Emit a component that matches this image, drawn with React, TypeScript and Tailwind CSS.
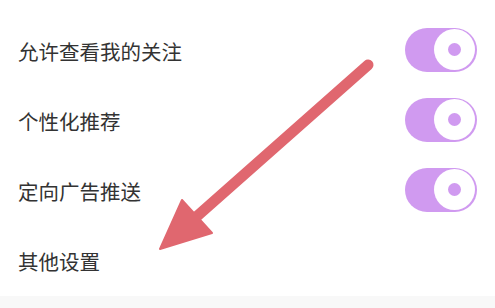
import React from "react";

const rows = [
  { label: "允许查看我的关注", toggle: true },
  { label: "个性化推荐", toggle: true },
  { label: "定向广告推送", toggle: true },
  { label: "其他设置", toggle: false },
];

function Toggle() {
  return (
    <div className="w-[72px] h-[44px] rounded-full bg-[#d09af0] flex items-center justify-end pr-[2px]">
      <div className="w-[41px] h-[41px] rounded-full bg-white flex items-center justify-center">
        <div className="w-[13px] h-[13px] rounded-full bg-[#d09af0]" />
      </div>
    </div>
  );
}

export default function App() {
  return (
    <div
      className="relative w-[495px] h-[308px] bg-white overflow-hidden flex flex-col"
      style={{ fontFamily: '"Noto Sans CJK SC", "Noto Sans", sans-serif' }}
    >
      <div className="pt-[16px] flex flex-col flex-1">
        {rows.map((r) => (
          <div key={r.label} className="h-[70px] flex items-center justify-between pl-[18px] pr-[18px]">
            <span className="text-[20.5px] leading-none text-[#333333]">{r.label}</span>
            {r.toggle && <div className="-mt-[3px]"><Toggle /></div>}
          </div>
        ))}
      </div>
      <div className="h-[12px] bg-[#f8f8f8]" />
      <svg className="absolute left-0 top-0" width="495" height="308" viewBox="0 0 495 308">
        <line x1="368" y1="65" x2="195" y2="218" stroke="#e0676f" strokeWidth="11" strokeLinecap="round" />
        <polygon points="160,249 182,200 212,233" fill="#e0676f" stroke="#e0676f" strokeWidth="2" strokeLinejoin="round" />
      </svg>
    </div>
  );
}
